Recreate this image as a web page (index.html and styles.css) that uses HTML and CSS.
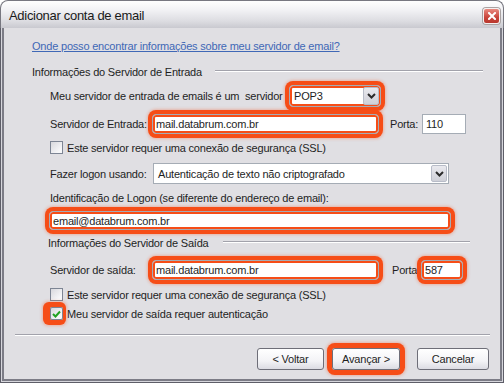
FILE: index.html
```html
<!DOCTYPE html>
<html lang="pt-BR">
  <head>
    <meta charset="UTF-8">
    <title>Adicionar conta de email</title>
    <link rel="stylesheet" href="styles.css">
  </head>
  <body>
    <div class="window">
      <div class="titlebar">
        <span class="title">Adicionar conta de email</span>
        <span class="close">
          <svg width="8" height="8" viewBox="0 0 8 8"><path d="M1 1 L7 7 M7 1 L1 7" stroke="#fff" stroke-width="2" stroke-linecap="square"/></svg>
        </span>
      </div>
      <div class="content">
        <a class="help" href="#">Onde posso encontrar informações sobre meu servidor de email?</a>

        <div class="group group-in">
          <span>Informações do Servidor de Entrada</span>
          <span class="rule"></span>
        </div>

        <div class="row row-type">
          <span class="label label-type">Meu servidor de entrada de emails é um&nbsp; servidor</span>
          <div class="combo combo-type hl">
            <span class="combo-text">POP3</span>
            <span class="arrow"><svg width="9" height="6" viewBox="0 0 9 6"><path d="M1 1 L4.5 4.5 L8 1" fill="none" stroke="#2b2b2b" stroke-width="2"/></svg></span>
          </div>
        </div>

        <div class="row row-in">
          <span class="label">Servidor de Entrada:</span>
          <div class="field field-server hl">mail.databrum.com.br</div>
          <span class="label label-port">Porta:</span>
          <div class="field field-port">110</div>
        </div>

        <div class="row check-row check-ssl-in">
          <span class="check"></span>
          <span>Este servidor requer uma conexão de segurança (SSL)</span>
        </div>

        <div class="row row-logon">
          <span class="label label-logon">Fazer logon usando:</span>
          <div class="combo combo-logon">
            <span class="combo-text">Autenticação de texto não criptografado</span>
            <span class="arrow"><svg width="9" height="6" viewBox="0 0 9 6"><path d="M1 1 L4.5 4.5 L8 1" fill="none" stroke="#2b2b2b" stroke-width="2"/></svg></span>
          </div>
        </div>

        <div class="row row-ident">
          <span>Identificação de Logon (se diferente do endereço de email):</span>
        </div>

        <div class="row row-email">
          <div class="field field-email hl">email@databrum.com.br</div>
        </div>

        <div class="group group-out">
          <span>Informações do Servidor de Saída</span>
          <span class="rule"></span>
        </div>

        <div class="row row-out">
          <span class="label">Servidor de saída:</span>
          <div class="field field-server hl">mail.databrum.com.br</div>
          <span class="label label-port2">Porta</span>
          <div class="field field-port2 hl">587</div>
        </div>

        <div class="row check-row check-ssl-out">
          <span class="check"></span>
          <span>Este servidor requer uma conexão de segurança (SSL)</span>
        </div>

        <div class="row check-row check-auth">
          <span class="check checked hl-check">
            <svg width="9" height="8" viewBox="0 0 9 8"><path d="M1 4 L3.5 6.5 L8 1.5" fill="none" stroke="#21a221" stroke-width="2"/></svg>
          </span>
          <span>Meu servidor de saída requer autenticação</span>
        </div>

        <div class="separator"></div>

        <div class="buttons">
          <button class="btn btn-back">&lt; Voltar</button>
          <button class="btn btn-next hl-btn">Avançar &gt;</button>
          <button class="btn btn-cancel">Cancelar</button>
        </div>
      </div>
    </div>
  </body>
</html>
```

FILE: styles.css
```css
html, body {
    margin: 0;
    padding: 0;
    background: #ffffff;
}
body {
    font-family: "Liberation Sans", Arial, sans-serif;
    font-size: 11px;
    letter-spacing: -0.2px;
    color: #1e1e1e;
}
.window {
    width: 504px;
    height: 383px;
    overflow: hidden;
}
.titlebar {
    box-sizing: border-box;
    height: 28px;
    display: flex;
    align-items: center;
    padding-left: 8px;
    border: 1px solid #777780;
    border-bottom: none;
    border-radius: 8px 8px 0 0;
    background: linear-gradient(#fefefe 0%, #f1f1f4 35%, #dcdce1 75%, #c9c9d0 100%);
}
.title {
    font-size: 13px;
    letter-spacing: -0.3px;
    color: #1a1a1a;
    padding-top: 1px;
    flex: 1;
}
.close {
    box-sizing: border-box;
    width: 17px;
    height: 16px;
    margin-right: 3px;
    margin-top: 2px;
    display: flex;
    align-items: center;
    justify-content: center;
    border: 1px solid #f4f0f0;
    border-radius: 3px;
    background: linear-gradient(#e98a80, #c9443a 60%, #b9372e);
    box-shadow: 0 0 0 1px #a9a2a2;
}
.content {
    box-sizing: border-box;
    height: 355px;
    padding-top: 11px;
    background: #e0dfe3;
    box-shadow: inset 1px 0 0 #5e5e68, inset -1px 0 0 #5e5e68, inset 0 -1px 0 #5e5e68,
                inset 2px 0 0 #d6d6dc, inset -2px 0 0 #d6d6dc, inset 0 -2px 0 #d6d6dc,
                inset 4px 0 0 #7c7c86, inset -4px 0 0 #7c7c86, inset 0 -4px 0 #7c7c86;
}
.help {
    display: block;
    width: max-content;
    margin-left: 32px;
    line-height: 14px;
    height: 14px;
    color: #4068b6;
    text-decoration: underline;
}
.group {
    display: flex;
    align-items: center;
    height: 14px;
    line-height: 14px;
}
.group .rule {
    flex: 1;
    height: 0;
    border-top: 1px solid #a2a2ab;
    border-bottom: 1px solid #ffffff;
    margin-top: -2px;
}
.group-in {
    margin-top: 12px;
    padding-left: 32px;
    padding-right: 21px;
}
.group-in .rule {
    margin-left: 13px;
}
.group-out {
    margin-top: 6px;
    padding-left: 48px;
    padding-right: 34px;
}
.group-out .rule {
    margin-left: 14px;
}
.row {
    display: flex;
    align-items: center;
    padding-left: 50px;
    white-space: nowrap;
}
.label {
    width: 102px;
    flex: none;
}
.label-type {
    width: 239px;
}
.label-logon {
    width: 103px;
}
.label-port {
    width: 32px;
    margin-left: 11px;
}
.label-port2 {
    width: 29px;
    margin-left: 13px;
}
.row-type {
    margin-top: 6px;
    height: 22px;
}
.row-in {
    margin-top: 7px;
    height: 20px;
}
.check-ssl-in {
    margin-top: 7px;
    height: 13px;
}
.row-logon {
    margin-top: 9px;
    height: 21px;
}
.row-ident {
    margin-top: 7px;
    height: 14px;
}
.row-email {
    margin-top: 6px;
    height: 19px;
    padding-left: 49px;
}
.row-out {
    margin-top: 10px;
    height: 20px;
}
.check-ssl-out {
    margin-top: 8px;
    height: 13px;
}
.check-auth {
    margin-top: 6px;
    height: 13px;
}
.field {
    box-sizing: border-box;
    height: 100%;
    background: #ffffff;
    border: 1px solid #a5acb5;
    padding-left: 3px;
    display: flex;
    align-items: center;
    flex: none;
}
.field-server {
    width: 227px;
}
.field-port {
    width: 44px;
}
.field-port2 {
    width: 42px;
}
.field-email {
    width: 402px;
}
.combo {
    box-sizing: border-box;
    height: 100%;
    display: flex;
    align-items: stretch;
    background: #ffffff;
    border: 1px solid #a5acb5;
    flex: none;
}
.combo-type {
    width: 92px;
}
.combo-logon {
    width: 296px;
}
.combo-text {
    flex: 1;
    display: flex;
    align-items: center;
    padding-left: 4px;
}
.arrow {
    box-sizing: border-box;
    width: 16px;
    margin: 1px;
    display: flex;
    align-items: center;
    justify-content: center;
    border: 1px solid #b8bcc8;
    border-radius: 2px;
    background: linear-gradient(#e9e9ee, #cfd0d8);
}
.check {
    box-sizing: border-box;
    width: 13px;
    height: 13px;
    margin-right: 4px;
    flex: none;
    display: flex;
    align-items: center;
    justify-content: center;
    border: 1px solid #7d8594;
    background: linear-gradient(135deg, #d8d8dd, #f7f7f9 80%);
}
.hl {
    border-radius: 4px;
    box-shadow: 0 0 0 4px #f64d17, inset 0 0 0 2px #f64d17, 0 0 3px 5px rgba(246, 77, 23, 0.3);
}
.hl-check {
    border-radius: 2px;
    box-shadow: -2px 0 0 5px #f64d17, -2px 0 3px 6px rgba(246, 77, 23, 0.3);
}
.separator {
    margin: 14px 14px 0 15px;
    height: 0;
    border-top: 1px solid #a2a2ab;
    border-bottom: 1px solid #ffffff;
}
.buttons {
    display: flex;
    margin-top: 12px;
    padding-left: 257px;
    height: 22px;
}
.btn {
    box-sizing: border-box;
    height: 22px;
    padding: 0;
    font-family: "Liberation Sans", Arial, sans-serif;
    font-size: 11px;
    letter-spacing: -0.2px;
    color: #1e1e1e;
    border: 1px solid #6e6e78;
    border-radius: 3px;
    background: linear-gradient(#ffffff 0%, #f3f3f6 60%, #dcdce3 100%);
}
.btn-back {
    width: 67px;
}
.btn-next {
    width: 68px;
    margin-left: 8px;
}
.btn-cancel {
    width: 72px;
    margin-left: 17px;
}
.hl-btn {
    box-shadow: 0 0 0 5px #f64d17, 0 0 3px 6px rgba(246, 77, 23, 0.3);
}
```
